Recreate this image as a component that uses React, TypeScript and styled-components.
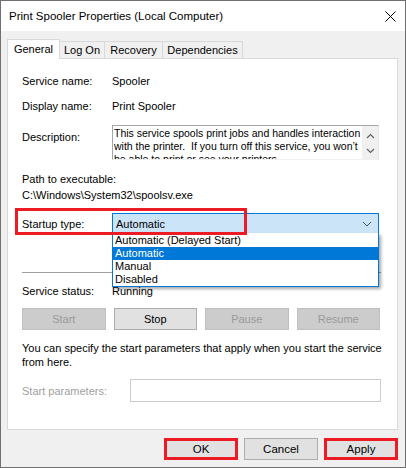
import styled, { createGlobalStyle } from 'styled-components';

const GlobalStyle = createGlobalStyle`
  html, body {
    margin: 0;
    padding: 0;
    background: #3a3a3a;
  }
  * {
    box-sizing: border-box;
  }
`;

const tabs = [
  { label: 'General', w: 53, active: true },
  { label: 'Log On', w: 46 },
  { label: 'Recovery', w: 59 },
  { label: 'Dependencies', w: 81 },
];

const dropdownItems = ['Automatic (Delayed Start)', 'Automatic', 'Manual', 'Disabled'];

function App() {
  return (
    <>
      <GlobalStyle />
      <Window>
        <TitleBar>
          <Title>Print Spooler Properties (Local Computer)</Title>
          <CloseIcon width='11' height='11' viewBox='0 0 11 11'>
            <path d='M0.5 0.5 L10.5 10.5 M10.5 0.5 L0.5 10.5' stroke='#000' strokeWidth='1' />
          </CloseIcon>
        </TitleBar>

        <Body>
          <TabStrip>
            {tabs.map((t) => (
              <Tab key={t.label} $w={t.w} $active={!!t.active}>
                {t.label}
              </Tab>
            ))}
          </TabStrip>

          <Panel>
            <InfoRow>
              <Label>Service name:</Label>
              <span>Spooler</span>
            </InfoRow>
            <InfoRow $mt={11}>
              <Label>Display name:</Label>
              <span>Print Spooler</span>
            </InfoRow>

            <DescRow>
              <Label $top={5}>Description:</Label>
              <TextBox>
                <TextLines>
                  {'This service spools print jobs and handles interaction\nwith the printer.  If you turn off this service, you won\u2019t\nbe able to print or see your printers.'}
                </TextLines>
                <ScrollBar>
                  <svg width='9' height='6' viewBox='0 0 9 6'>
                    <polyline points='1,5 4.5,1.5 8,5' fill='none' stroke='#606060' strokeWidth='1.2' />
                  </svg>
                  <svg width='9' height='6' viewBox='0 0 9 6'>
                    <polyline points='1,1 4.5,4.5 8,1' fill='none' stroke='#606060' strokeWidth='1.2' />
                  </svg>
                </ScrollBar>
              </TextBox>
            </DescRow>

            <InfoRow $mt={12}>Path to executable:</InfoRow>
            <InfoRow $mt={2}>C:\Windows\System32\spoolsv.exe</InfoRow>

            <StartupRow>
              <Label>Startup type:</Label>
              <Combo>
                <span>Automatic</span>
                <svg width='10' height='6' viewBox='0 0 10 6'>
                  <polyline points='1,1 5,5 9,1' fill='none' stroke='#555' strokeWidth='1' />
                </svg>
                <DropList>
                  {dropdownItems.map((item, i) => (
                    <DropItem key={item} $selected={i === 1}>
                      {item}
                    </DropItem>
                  ))}
                </DropList>
              </Combo>
              <RedMark />
            </StartupRow>

            <Separator />

            <InfoRow $mt={11}>
              <Label>Service status:</Label>
              <span>Running</span>
            </InfoRow>

            <ActionGrid>
              <ActionButton disabled>Start</ActionButton>
              <ActionButton>Stop</ActionButton>
              <ActionButton disabled>Pause</ActionButton>
              <ActionButton disabled>Resume</ActionButton>
            </ActionGrid>

            <HelpText>
              You can specify the start parameters that apply when you start the service
              <br />
              from here.
            </HelpText>

            <ParamRow>
              <Label $w={108} $muted>
                Start parameters:
              </Label>
              <ParamInput />
            </ParamRow>
          </Panel>

          <Footer>
            <DialogButton $marked>OK</DialogButton>
            <DialogButton>Cancel</DialogButton>
            <DialogButton $marked>Apply</DialogButton>
          </Footer>
        </Body>
      </Window>
    </>
  );
}

const Window = styled.div`
  width: 406px;
  height: 468px;
  border: 1px solid #707070;
  background: #f0f0f0;
  display: flex;
  flex-direction: column;
  font-family: 'Liberation Sans', Arial, sans-serif;
  font-size: 11px;
  color: #000;
  overflow: hidden;
`;

const TitleBar = styled.div`
  height: 30px;
  flex-shrink: 0;
  background: #fff;
  display: flex;
  align-items: center;
  justify-content: space-between;
  padding: 0 9px 0 8px;
`;

const Title = styled.div`
  font-size: 11.5px;
`;

const CloseIcon = styled.svg`
  display: block;
`;

const Body = styled.div`
  flex: 1;
  display: flex;
  flex-direction: column;
  padding: 8px 7px 0 6px;
`;

const TabStrip = styled.div`
  height: 20px;
  display: flex;
  align-items: flex-end;
  margin-bottom: -1px;
  position: relative;
  z-index: 1;
`;

const Tab = styled.div<{ $w: number; $active: boolean }>`
  width: ${(p) => p.$w}px;
  height: ${(p) => (p.$active ? 20 : 18)}px;
  margin-left: ${(p) => (p.$active ? 0 : -1)}px;
  border: 1px solid #d9d9d9;
  border-bottom: ${(p) => (p.$active ? 'none' : '1px solid #d9d9d9')};
  background: ${(p) => (p.$active ? '#fff' : '#f0f0f0')};
  display: flex;
  justify-content: center;
  align-items: ${(p) => (p.$active ? 'flex-start' : 'center')};
  padding-top: ${(p) => (p.$active ? 3 : 0)}px;
  white-space: nowrap;
`;

const Panel = styled.div`
  height: 372px;
  flex-shrink: 0;
  border: 1px solid #d9d9d9;
  background: #fff;
  padding: 15px 16px 0 14px;
  display: flex;
  flex-direction: column;
`;

const InfoRow = styled.div<{ $mt?: number }>`
  height: 14px;
  line-height: 14px;
  margin-top: ${(p) => p.$mt ?? 0}px;
  display: flex;
  white-space: nowrap;
`;

const Label = styled.div<{ $w?: number; $top?: number; $muted?: boolean }>`
  width: ${(p) => p.$w ?? 90}px;
  flex-shrink: 0;
  padding-top: ${(p) => p.$top ?? 0}px;
  line-height: 14px;
  color: ${(p) => (p.$muted ? '#a0a0a0' : '#000')};
  white-space: nowrap;
`;

const DescRow = styled.div`
  margin-top: 12px;
  display: flex;
  align-items: flex-start;
`;

const TextBox = styled.div`
  width: 267px;
  height: 35px;
  border: 1px solid #a6a6a6;
  border-right-color: #e3e3e3;
  border-bottom-color: #f0f0f0;
  display: flex;
  overflow: hidden;
`;

const TextLines = styled.div`
  flex: 1;
  padding: 1px 0 0 1px;
  font-size: 10.5px;
  line-height: 13px;
  white-space: pre;
  overflow: hidden;
`;

const ScrollBar = styled.div`
  width: 16px;
  flex-shrink: 0;
  background: #f0f0f0;
  display: flex;
  flex-direction: column;
  align-items: center;
  justify-content: space-between;
  padding: 7px 0 5px;
`;

const StartupRow = styled.div`
  margin-top: 11px;
  height: 21px;
  display: flex;
  align-items: center;
  position: relative;
  z-index: 2;
`;

const Combo = styled.div`
  position: relative;
  width: 267px;
  height: 21px;
  border: 1px solid #0078d7;
  background: #cce4f7;
  display: flex;
  align-items: center;
  justify-content: space-between;
  padding: 0 6px 0 3px;
`;

const DropList = styled.div`
  position: absolute;
  top: 100%;
  left: -1px;
  right: -1px;
  padding-top: 1px;
  background: #fff;
  border: 1px solid #0078d7;
  border-top: none;
  box-shadow: 2px 2px 3px rgba(0, 0, 0, 0.35);
`;

const DropItem = styled.div<{ $selected?: boolean }>`
  height: 13px;
  line-height: 13px;
  padding-left: 2px;
  background: ${(p) => (p.$selected ? '#0078d7' : '#fff')};
  color: ${(p) => (p.$selected ? '#fff' : '#000')};
  white-space: nowrap;
`;

const RedMark = styled.div`
  position: absolute;
  left: -7px;
  top: -5px;
  width: 232px;
  height: 27px;
  border: 3px solid #ed1c24;
  pointer-events: none;
`;

const Separator = styled.div`
  margin-top: 38px;
  height: 1px;
  background: #a0a0a0;
`;

const ActionGrid = styled.div`
  margin-top: 10px;
  display: grid;
  grid-template-columns: repeat(4, 1fr);
  gap: 8px;
  padding-right: 1px;
`;

const ActionButton = styled.button`
  height: 22px;
  padding: 0;
  font: inherit;
  border: 1px solid ${(p) => (p.disabled ? '#bfbfbf' : '#adadad')};
  background: ${(p) => (p.disabled ? '#cccccc' : '#e1e1e1')};
  color: ${(p) => (p.disabled ? '#9a9a9a' : '#000')};
`;

const HelpText = styled.div`
  margin-top: 11px;
  line-height: 14px;
  white-space: nowrap;
`;

const ParamRow = styled.div`
  margin-top: 10px;
  display: flex;
  align-items: center;
`;

const ParamInput = styled.div`
  flex: 1;
  height: 23px;
  border: 1px solid #cccccc;
  background: #fff;
`;

const Footer = styled.div`
  margin-top: 8px;
  display: flex;
  justify-content: flex-end;
  gap: 6px;
`;

const DialogButton = styled.button<{ $marked?: boolean }>`
  width: 74px;
  height: 22px;
  padding: 0;
  font: inherit;
  font-size: 11.5px;
  color: #000;
  background: #e1e1e1;
  border: ${(p) => (p.$marked ? '3px solid #ed1c24' : '1px solid #adadad')};
`;

export default App;
